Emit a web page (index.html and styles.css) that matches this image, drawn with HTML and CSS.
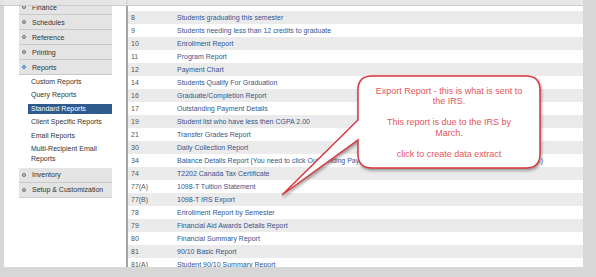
FILE: index.html
```html
<!DOCTYPE html>
<html lang="en">
<head>
    <meta charset="UTF-8">
    <title>Standard Reports</title>
    <link rel="stylesheet" href="styles.css">
</head>
<body>
    <div class="frame">
        <div class="panel">
            <div class="sidebar">
                <div class="nav-head"><span class="nav-icon"></span>Finance</div>
                <div class="nav-head"><span class="nav-icon"></span>Schedules</div>
                <div class="nav-head"><span class="nav-icon"></span>Reference</div>
                <div class="nav-head"><span class="nav-icon"></span>Printing</div>
                <div class="nav-head open"><span class="nav-icon"></span>Reports</div>
                <ul class="nav-sub">
                    <li>Custom Reports</li>
                    <li>Query Reports</li>
                    <li class="active">Standard Reports</li>
                    <li>Client Specific Reports</li>
                    <li>Email Reports</li>
                    <li class="multi">Multi-Recipient Email Reports</li>
                </ul>
                <div class="nav-head"><span class="nav-icon"></span>Inventory</div>
                <div class="nav-head last"><span class="nav-icon"></span>Setup &amp; Customization</div>
            </div>

            <div class="content">
                <table class="reports">
                    <tr><td class="num">8</td><td>Students graduating this semester</td></tr>
                    <tr><td class="num">9</td><td>Students needing less than 12 credits to graduate</td></tr>
                    <tr><td class="num">10</td><td>Enrollment Report</td></tr>
                    <tr><td class="num">11</td><td>Program Report</td></tr>
                    <tr><td class="num">12</td><td>Payment Chart</td></tr>
                    <tr><td class="num">14</td><td>Students Qualify For Graduation</td></tr>
                    <tr><td class="num">16</td><td>Graduate/Completion Report</td></tr>
                    <tr><td class="num">17</td><td>Outstanding Payment Details</td></tr>
                    <tr><td class="num">19</td><td>Student list who have less then CGPA 2.00</td></tr>
                    <tr><td class="num">21</td><td>Transfer Grades Report</td></tr>
                    <tr><td class="num">30</td><td>Daily Collection Report</td></tr>
                    <tr><td class="num">34</td><td>Balance Details Report (You need to click Outstanding Payment Details Report first to show all the balances correctly.)</td></tr>
                    <tr><td class="num">74</td><td>T2202 Canada Tax Certificate</td></tr>
                    <tr><td class="num">77(A)</td><td>1098-T Tuition Statement</td></tr>
                    <tr><td class="num">77(B)</td><td>1098-T IRS Export</td></tr>
                    <tr><td class="num">78</td><td>Enrollment Report by Semester</td></tr>
                    <tr><td class="num">79</td><td>Financial Aid Awards Details Report</td></tr>
                    <tr><td class="num">80</td><td>Financial Summary Report</td></tr>
                    <tr><td class="num">81</td><td>90/10 Basic Report</td></tr>
                    <tr><td class="num">81(A)</td><td>Student 90/10 Summary Report</td></tr>
                </table>
            </div>
        </div>

        <!-- annotation bubble pointing at the IRS export row -->
        <div class="callout">
            <svg class="callout-shape" width="280" height="135" viewBox="0 0 280 135">
                <path d="M102 6 H256 Q270 6 270 20 V84 Q270 98 256 98 H102 Q88 98 88 84 V70 L12 125 L88 50 V20 Q88 6 102 6 Z"/>
            </svg>
            <div class="callout-text">
                <p>Export Report - this is what is sent to<br>the IRS.</p>
                <p>This report is due to the IRS by<br>March.</p>
                <p>click to create data extract</p>
            </div>
        </div>
    </div>
</body>
</html>
```

FILE: styles.css
```css
body {
    margin: 0;
    font-family: "Liberation Sans", Arial, sans-serif;
}
.frame {
    position: relative;
    width: 596px;
    height: 277px;
    box-sizing: border-box;
    padding: 0 13px 10px 4px;
    background: #d7d7d7;
}
.frame::before {
    content: "";
    position: absolute;
    top: 0;
    left: 0;
    right: 13px;
    height: 5px;
    background: rgba(228, 228, 228, 0.85);
    border-bottom: 1px solid #cbcbcb;
    z-index: 2;
}
.panel {
    display: flex;
    height: 267px;
    background: white;
    overflow: hidden;
}
.sidebar {
    width: 93px;
    padding: 0 14px 0 15px;
    flex-shrink: 0;
    font-size: 7px;
    color: #333;
}
.nav-head {
    display: flex;
    align-items: center;
    height: 14px;
    background: #e4e4e4;
    border-bottom: 1px solid #c9c9c9;
}
.nav-head.last {
    border-bottom: 1px solid #cfcfcf;
}
.nav-icon {
    width: 2px;
    height: 2px;
    margin: 0 6px 0 3px;
    border: 1.5px solid #6e6e6e;
    border-radius: 50%;
    background: #cfcfcf;
}
.nav-head.open .nav-icon {
    border-color: #3a7ccc;
    background: #a9c8ee;
}
.nav-sub {
    list-style: none;
    margin: 0;
    padding: 1.5px 0 1px 9px;
}
.nav-sub li {
    line-height: 10px;
    padding-left: 3px;
    margin-bottom: 3.5px;
}
.nav-sub li.multi {
    line-height: 9.5px;
    padding-right: 12px;
}
.nav-sub li.active {
    background: #2f5b8c;
    color: white;
}
.content {
    flex: 1;
    padding-top: 11px;
    border-left: 2px solid #a5a5a5;
}
.reports {
    width: 100%;
    border-collapse: collapse;
    font-size: 7px;
    color: #34558f;
}
.reports td {
    height: 13px;
    padding: 0;
    line-height: 13px;
    white-space: nowrap;
}
.reports td.num {
    width: 46px;
    padding-left: 3px;
    color: #555;
}
.reports tr:nth-child(odd) {
    background: #ebebeb;
}
.callout {
    position: absolute;
    left: 270px;
    top: 70px;
    width: 280px;
    height: 135px;
    z-index: 3;
}
.callout-shape {
    overflow: visible;
    filter: drop-shadow(1px 2px 1.5px rgba(0, 0, 0, 0.35));
}
.callout-shape path {
    fill: white;
    stroke: #d8393e;
    stroke-width: 1.5;
}
.callout-text {
    position: absolute;
    left: 88px;
    top: 15.5px;
    width: 182px;
    text-align: center;
    font-size: 9px;
    line-height: 10.5px;
    color: #e2555a;
}
.callout-text p {
    margin: 0 0 10.5px;
}
```
